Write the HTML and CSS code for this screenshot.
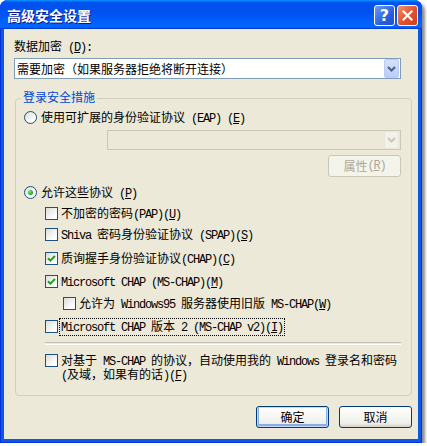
FILE: index.html
```html
<!DOCTYPE html>
<html lang="zh-CN">
<head>
  <meta charset="UTF-8">
  <title>高级安全设置</title>
  <link rel="stylesheet" href="styles.css">
</head>
<body>
  <div class="window">
    <div class="titlebar">
      <span class="title">高级安全设置</span>
      <div class="title-buttons">
        <div class="tb-btn tb-help">?</div>
        <div class="tb-btn tb-close">
          <svg width="11" height="11" viewBox="0 0 11 11"><path d="M1.5 1.5 L9.5 9.5 M9.5 1.5 L1.5 9.5" stroke="#fff" stroke-width="2.2" stroke-linecap="square"/></svg>
        </div>
      </div>
    </div>

    <div class="client">
      <div class="label">数据加密<span class="en"> (<u>D</u>):</span></div>
      <div class="combo">
        <span class="combo-text">需要加密（如果服务器拒绝将断开连接）</span>
        <span class="combo-btn">
          <svg width="9" height="6" viewBox="0 0 9 6"><path d="M1 1 L4.5 4.5 L8 1" fill="none" stroke="#4D6185" stroke-width="2"/></svg>
        </span>
      </div>

      <div class="group">
        <div class="group-title">登录安全措施</div>

        <div class="row r-eap">
          <span class="radio"></span>
          <span class="text">使用可扩展的身份验证协议<span class="en"> (EAP) (<u>E</u>)</span></span>
        </div>

        <div class="combo combo-disabled">
          <span class="combo-text"></span>
          <span class="combo-btn">
            <svg width="9" height="6" viewBox="0 0 9 6"><path d="M1 1 L4.5 4.5 L8 1" fill="none" stroke="#C9C7BA" stroke-width="2"/></svg>
          </span>
        </div>

        <div class="btn btn-disabled btn-props">属性<span class="en"> (<u>R</u>)</span></div>

        <div class="row r-allow">
          <span class="radio checked"></span>
          <span class="text">允许这些协议<span class="en"> (<u>P</u>)</span></span>
        </div>

        <div class="row indent r-pap">
          <span class="check"></span>
          <span class="text">不加密的密码<span class="en">(PAP)(<u>U</u>)</span></span>
        </div>

        <div class="row indent r-spap">
          <span class="check"></span>
          <span class="text"><span class="en">Shiva </span>密码身份验证协议<span class="en"> (SPAP)(<u>S</u>)</span></span>
        </div>

        <div class="row indent r-chap">
          <span class="check checked">
            <svg width="9" height="9" viewBox="0 0 9 9"><path d="M1 4.2 L3.4 6.6 L8 2" fill="none" stroke="#21A121" stroke-width="2"/></svg>
          </span>
          <span class="text">质询握手身份验证协议<span class="en">(CHAP)(<u>C</u>)</span></span>
        </div>

        <div class="row indent r-mschap">
          <span class="check checked">
            <svg width="9" height="9" viewBox="0 0 9 9"><path d="M1 4.2 L3.4 6.6 L8 2" fill="none" stroke="#21A121" stroke-width="2"/></svg>
          </span>
          <span class="text"><span class="en">Microsoft CHAP (MS-CHAP)(<u>M</u>)</span></span>
        </div>

        <div class="row indent2 r-win95">
          <span class="check"></span>
          <span class="text">允许为<span class="en"> Windows95 </span>服务器使用旧版<span class="en"> MS-CHAP(<u>W</u>)</span></span>
        </div>

        <div class="row indent r-v2">
          <span class="check"></span>
          <span class="text focused"><span class="en">Microsoft CHAP </span>版本<span class="en"> 2 (MS-CHAP v2)(<u>I</u>)</span></span>
        </div>

        <div class="separator"></div>

        <div class="row indent multi r-auto">
          <span class="check"></span>
          <span class="text">
            <span class="line">对基于<span class="en"> MS-CHAP </span>的协议，自动使用我的<span class="en"> Windows </span>登录名和密码</span>
            <span class="line"><span class="en">(</span>及域，如果有的话<span class="en">)(<u>F</u>)</span></span>
          </span>
        </div>
      </div>

      <div class="actions">
        <div class="btn btn-default">确定</div>
        <div class="btn">取消</div>
      </div>
    </div>
  </div>
</body>
</html>
```

FILE: styles.css
```css
body {
  margin: 0;
  background-color: #ffffff;
  font-family: "Noto Sans CJK SC", sans-serif;
  font-size: 12px;
  color: #000000;
}

.window {
  width: 422px;
  height: 443px;
  box-sizing: border-box;
  padding: 0 4px 4px 4px;
  background-color: #0A58E6;
  border-radius: 8px 8px 0 0;
  box-shadow: inset 0 0 0 1px #0831D9, 3px 3px 3px rgba(0, 0, 0, 0.45);
  display: flex;
  flex-direction: column;
}

.titlebar {
  height: 29px;
  margin: 0 -4px;
  padding: 0 4px 0 7px;
  display: flex;
  align-items: center;
  justify-content: space-between;
  border-radius: 8px 8px 0 0;
  background: linear-gradient(180deg, #0997ff, #0053ee 8%, #0050ee 40%, #0066ff 88%, #0066ff 93%, #005bff 95%, #003dd7 96%, #003dd7);
}

.title {
  color: #ffffff;
  font-size: 14px;
  font-weight: bold;
  text-shadow: 1px 1px #0A1883;
  margin-top: 1px;
}

.title-buttons {
  display: flex;
  gap: 2px;
  margin-top: 2px;
}

.tb-btn {
  width: 21px;
  height: 21px;
  box-sizing: border-box;
  border: 1px solid #ffffff;
  border-radius: 3px;
  display: flex;
  align-items: center;
  justify-content: center;
}

.tb-help {
  background: linear-gradient(135deg, #6F9BF8, #2A5FE0 60%, #1E4FCF);
  color: #ffffff;
  font-family: "DejaVu Sans", sans-serif;
  font-weight: bold;
  font-size: 16px;
  line-height: 1;
}

.tb-close {
  background: linear-gradient(135deg, #F0906F, #E0522E 55%, #C8401E);
}

.client {
  flex: 1;
  background-color: #ECE9D8;
  padding: 10px 6px 0 10px;
  display: flex;
  flex-direction: column;
}

.label {
  line-height: 14px;
  height: 14px;
}

.en {
  font-family: "Liberation Mono", monospace;
  font-size: 12px;
  letter-spacing: -1.2px;
}

.combo {
  margin-top: 5px;
  margin-right: 11px;
  height: 21px;
  box-sizing: border-box;
  border: 1px solid #7F9DB9;
  background-color: #ffffff;
  display: flex;
  align-items: stretch;
}

.combo-text {
  flex: 1;
  padding-left: 2px;
  line-height: 19px;
}

.combo-btn {
  width: 15px;
  margin: 0 1px 0 0;
  box-sizing: border-box;
  border: 1px solid #BACCF6;
  border-radius: 2px;
  background: linear-gradient(180deg, #D6E2FC, #B9CDF7);
  display: flex;
  align-items: center;
  justify-content: center;
}

.group {
  margin-top: 19px;
  margin-left: 1px;
  border: 1px solid #D0D0BF;
  border-radius: 4px;
  padding: 0 10px 14px 8px;
  display: flex;
  flex-direction: column;
}

.group-title {
  margin-top: -9px;
  margin-left: -3px;
  padding: 0 2px;
  width: fit-content;
  line-height: 14px;
  color: #0046D5;
  background-color: #ECE9D8;
}

.row {
  height: 13px;
  display: flex;
  align-items: center;
  gap: 3px;
  white-space: nowrap;
}

.row .text {
  line-height: 14px;
}

.r-eap { margin-top: 7px; }
.r-allow { margin-top: 9px; }
.r-pap { margin-top: 8px; }
.r-spap { margin-top: 8px; }
.r-chap { margin-top: 11px; }
.r-mschap { margin-top: 10px; }
.r-win95 { margin-top: 9px; }
.r-v2 { margin-top: 10px; }
.r-auto { margin-top: 9px; }

.indent { margin-left: 21px; }
.indent2 { margin-left: 39px; }

.multi {
  height: auto;
  align-items: flex-start;
}

.multi .text {
  margin-top: -1px;
  display: flex;
  flex-direction: column;
}

.multi .line {
  height: 14px;
  line-height: 14px;
}

.radio {
  width: 13px;
  height: 13px;
  box-sizing: border-box;
  border: 1px solid #1C5180;
  border-radius: 50%;
  background: linear-gradient(135deg, #DCDCD7, #FFFFFF 75%);
  display: flex;
  align-items: center;
  justify-content: center;
  margin-right: 1px;
}

.radio.checked::after {
  content: "";
  width: 5px;
  height: 5px;
  border-radius: 50%;
  background: radial-gradient(circle at 35% 35%, #7BE582, #21A121 70%);
}

.check {
  width: 13px;
  height: 13px;
  flex-shrink: 0;
  box-sizing: border-box;
  border: 1px solid #1C5180;
  background: linear-gradient(135deg, #DCDCD7, #FFFFFF 80%);
  display: flex;
  align-items: center;
  justify-content: center;
}

.focused {
  outline: 1px dotted #000000;
  outline-offset: 0;
  padding: 0 1px;
  margin-left: -1px;
}

.combo-disabled {
  margin-top: 6px;
  margin-left: 83px;
  margin-right: 0;
  height: 20px;
  border-color: #C9C7BA;
  background-color: #ECE9D8;
}

.combo-disabled .combo-btn {
  border-color: #E8E6DA;
  background: #F2F1EA;
}

.btn {
  width: 73px;
  height: 22px;
  box-sizing: border-box;
  border: 1px solid #003C74;
  border-radius: 3px;
  background: linear-gradient(180deg, #FFFFFF, #F0F0EA 80%, #D6D0C5);
  display: flex;
  align-items: center;
  justify-content: center;
  line-height: 14px;
}

.btn-props {
  margin-top: 5px;
  align-self: flex-end;
}

.btn-disabled {
  border-color: #C9C7BA;
  background: #F5F4EA;
  color: #ACA899;
}

.separator {
  margin-top: 9px;
  margin-left: 21px;
  height: 1px;
  border-top: 1px solid #C5C2B2;
  border-bottom: 1px solid #ffffff;
}

.actions {
  margin-top: 10px;
  display: flex;
  justify-content: flex-end;
  gap: 10px;
}

.btn-default {
  box-shadow: inset 0 0 0 1px #C6D7FB, inset 0 -1px 0 2px #89ADE4;
}
```
